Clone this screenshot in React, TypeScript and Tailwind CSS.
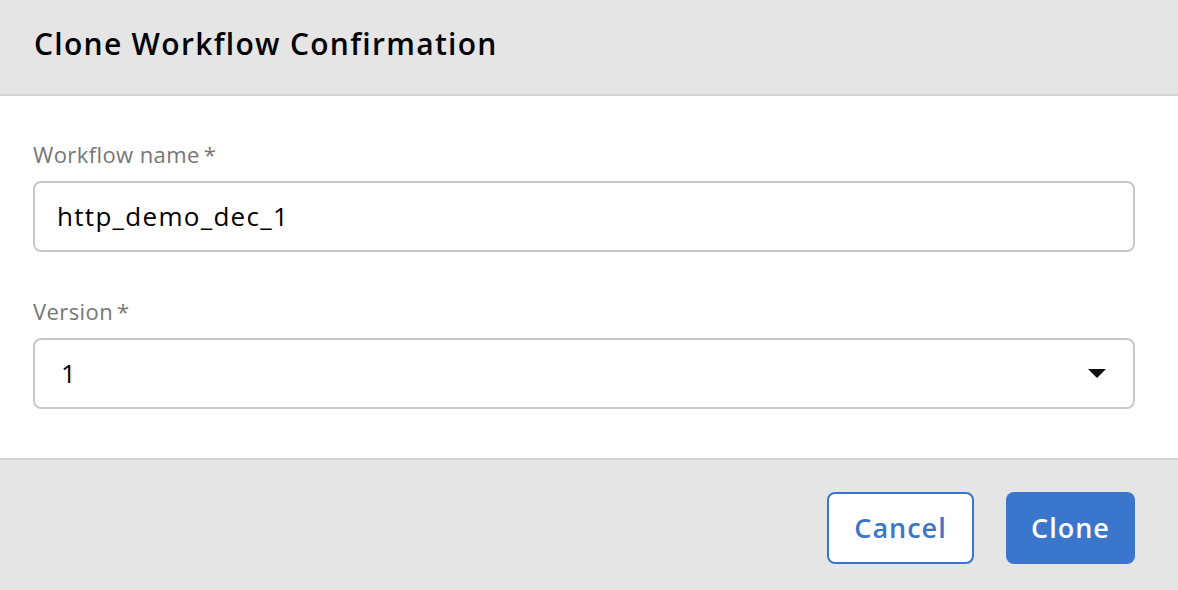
export default function App() {
  return (
    <div
      className="w-[1178px] h-[590px] flex flex-col bg-white text-black"
      style={{ fontFamily: '"Open Sans", Lato, sans-serif' }}
    >
      {/* Header */}
      <div className="h-[96px] shrink-0 bg-[#e5e5e5] border-b-2 border-[#d3d3d3] flex items-center px-[34px] pb-[6px]">
        <h2 className="text-[30px] font-semibold leading-none tracking-[1.3px]">Clone Workflow Confirmation</h2>
      </div>

      {/* Body */}
      <div className="flex-1 px-[33px] pt-[43px] flex flex-col">
        <label className="text-[22px] text-[#767676] leading-[30px] tracking-[0.4px] mb-[12px]">
          Workflow name<span className="ml-1">*</span>
        </label>
        <div className="h-[71px] border-2 border-[#c8c8c8] rounded-[8px] flex items-center px-[22px] text-[26px] tracking-[1.3px] w-[1102px]">
          http_demo_dec_1
        </div>

        <label className="text-[22px] text-[#767676] leading-[30px] tracking-[0.4px] mt-[44px] mb-[12px]">
          Version<span className="ml-1">*</span>
        </label>
        <div className="h-[71px] border-2 border-[#c8c8c8] rounded-[8px] flex items-center justify-between pl-[26px] pr-[27px] text-[26px] w-[1102px]">
          <span>1</span>
          <svg width="18" height="9" viewBox="0 0 18 9">
            <path d="M0 0 L18 0 L9 9 Z" fill="#111" />
          </svg>
        </div>
      </div>

      {/* Footer */}
      <div className="h-[132px] shrink-0 bg-[#e5e5e5] border-t-2 border-[#d3d3d3] flex items-start justify-end gap-[32px] pt-[32px] pr-[43px]">
        <button className="h-[72px] w-[147px] bg-white border-2 border-[#3a76cc] rounded-[8px] text-[#3a76cc] text-[27px] font-semibold tracking-[1px]">
          Cancel
        </button>
        <button className="h-[72px] w-[129px] bg-[#3a76cc] rounded-[8px] text-white text-[27px] font-semibold tracking-[1px]">
          Clone
        </button>
      </div>
    </div>
  );
}
